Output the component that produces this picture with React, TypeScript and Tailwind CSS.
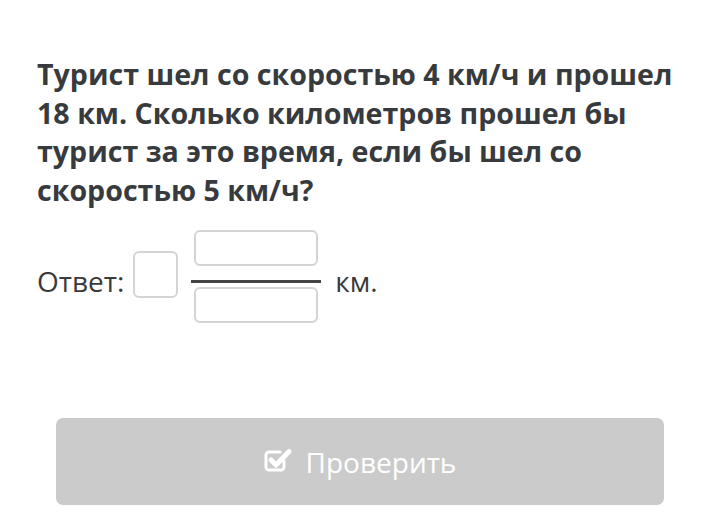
import React from "react";

function CheckSquareIcon() {
  return (
    <svg width="32" height="28" viewBox="0 0 32 28" className="mr-[10px] mb-[2px]" fill="none">
      <path d="M20 14 V20 a3 3 0 0 1 -3 3 H5 a3 3 0 0 1 -3 -3 V8 a3 3 0 0 1 3 -3 H16" stroke="white" strokeWidth="3" strokeLinecap="round" />
      <path d="M7 13 L12 18 L25 4.5" stroke="white" strokeWidth="5" strokeLinecap="round" strokeLinejoin="round" />
    </svg>
  );
}

export default function App() {
  return (
    <div className="w-[702px] h-[524px] bg-white overflow-hidden" style={{ fontFamily: '"Open Sans", "Noto Sans", sans-serif' }}>
      <div className="pt-[55px] pl-[37px]">
        <p className="text-[28.6px] leading-[38.5px] font-bold text-[#383b3e] whitespace-nowrap">
          Турист шел со скоростью 4 км/ч и прошел
          <br />
          18 км. Сколько километров прошел бы
          <br />
          турист за это время, если бы шел со
          <br />
          скоростью 5 км/ч?
        </p>
        <div className="mt-[21px] flex items-start">
          <span className="mt-[33px] text-[28px] leading-[36px] text-[#3a3a3a]">Ответ:</span>
          <div className="ml-[9px] mt-[21px] w-[45px] h-[47px] rounded-[6px] border-2 border-[#d4d4d4]"></div>
          <div className="ml-[13px] flex flex-col items-center w-[130px]">
            <div className="w-[124px] h-[36px] rounded-[6px] border-2 border-[#d4d4d4]"></div>
            <div className="mt-[14px] w-[130px] h-[3px] bg-[#444]"></div>
            <div className="mt-[4px] w-[124px] h-[36px] rounded-[6px] border-2 border-[#d4d4d4]"></div>
          </div>
          <span className="ml-[14px] mt-[33px] text-[28px] leading-[36px] text-[#3a3a3a]">км.</span>
        </div>
        <div className="mt-[95px] ml-[19px] w-[608px] h-[87px] rounded-[7px] bg-[#cbcbcb] flex items-center justify-center">
          <CheckSquareIcon />
          <span className="text-[28px] text-white leading-none">Проверить</span>
        </div>
      </div>
    </div>
  );
}
